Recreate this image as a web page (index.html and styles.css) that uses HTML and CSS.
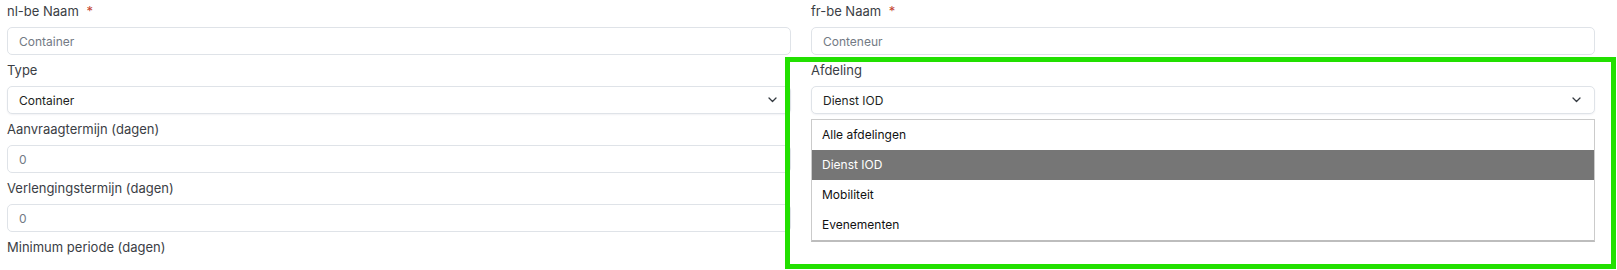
FILE: index.html
```html
<!DOCTYPE html>
<html lang="nl">
  <head>
    <meta charset="utf-8">
    <title>Type bewerken</title>
    <link rel="stylesheet" href="styles.css">
  </head>
  <body>
    <div class="form">
      <div class="col">
        <div class="field">
          <label class="label">nl-be Naam <span class="req">*</span></label>
          <input class="control" type="text" placeholder="Container">
        </div>
        <div class="field">
          <label class="label">Type</label>
          <div class="control select">
            <span>Container</span>
            <svg class="chevron" width="9" height="6" viewBox="0 0 9 6"><path d="M1 1l3.5 3.5L8 1" fill="none" stroke="#343a40" stroke-width="1.3" stroke-linecap="round" stroke-linejoin="round"/></svg>
          </div>
        </div>
        <div class="field">
          <label class="label">Aanvraagtermijn (dagen)</label>
          <input class="control" type="text" placeholder="0">
        </div>
        <div class="field">
          <label class="label">Verlengingstermijn (dagen)</label>
          <input class="control" type="text" placeholder="0">
        </div>
        <div class="field">
          <label class="label">Minimum periode (dagen)</label>
        </div>
      </div>

      <div class="col">
        <div class="field">
          <label class="label">fr-be Naam <span class="req">*</span></label>
          <input class="control" type="text" placeholder="Conteneur">
        </div>
        <div class="field">
          <label class="label">Afdeling</label>
          <div class="control select">
            <span>Dienst IOD</span>
            <svg class="chevron" width="9" height="6" viewBox="0 0 9 6"><path d="M1 1l3.5 3.5L8 1" fill="none" stroke="#343a40" stroke-width="1.3" stroke-linecap="round" stroke-linejoin="round"/></svg>
          </div>
          <ul class="options">
            <li>Alle afdelingen</li>
            <li class="selected">Dienst IOD</li>
            <li>Mobiliteit</li>
            <li>Evenementen</li>
          </ul>
        </div>
      </div>
    </div>

    <!-- annotation frame round the open select -->
    <div class="highlight"></div>
  </body>
</html>
```

FILE: styles.css
```css
body {
    margin: 0;
    position: relative;
    height: 270px;
    overflow: hidden;
    background: #fff;
    font-family: Inter, "Noto Sans", sans-serif;
}

.form {
    display: grid;
    grid-template-columns: 1fr 1fr;
    column-gap: 20px;
    padding: 0 22px 0 7px;
}

.field {
    display: flex;
    flex-direction: column;
    margin-bottom: 4px;
}

.label {
    padding-top: 2px;
    margin-bottom: 6px;
    line-height: 19px;
    font-size: 13px;
    color: #3b3e45;
}

.req {
    margin-left: 4px;
    color: #c4452f;
}

.control {
    box-sizing: border-box;
    height: 28px;
    margin: 0;
    padding: 0 11px;
    border: 1px solid #dfe3e8;
    border-radius: 5px;
    font-family: inherit;
    font-size: 12px;
    color: #1d1f23;
    background: #fff;
    outline: none;
}

.control::placeholder {
    color: #737a84;
}

.select {
    display: flex;
    align-items: center;
    justify-content: space-between;
    padding-right: 13px;
    box-shadow: 0 1px 2px rgba(30, 40, 90, 0.06);
}

.chevron {
    display: block;
}

.options {
    list-style: none;
    margin: 5px 0 0 0;
    padding: 0;
    border: 1px solid #cbcbcb;
    border-bottom: 2px solid #bdbdbd;
}

.options li {
    height: 30px;
    line-height: 30px;
    padding-left: 10px;
    font-size: 12px;
    color: #111;
}

.options .selected {
    background: #767676;
    color: #fff;
}

.highlight {
    position: absolute;
    left: 785px;
    top: 57px;
    width: 831px;
    height: 212px;
    box-sizing: border-box;
    border: 5px solid #22e000;
}
```
